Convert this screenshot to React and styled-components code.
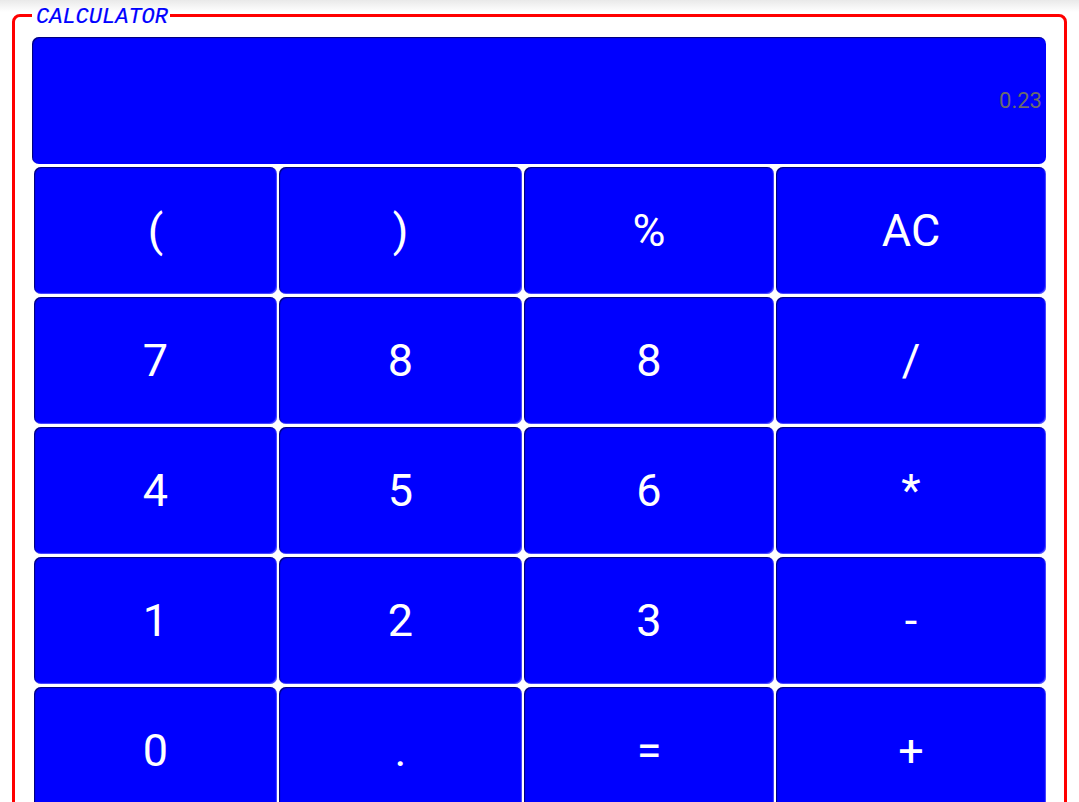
import React from "react";
import styled, { createGlobalStyle } from "styled-components";

const GlobalStyle = createGlobalStyle`
  html, body {
    margin: 0;
    padding: 0;
  }
  body {
    padding-top: 3px;
    background: linear-gradient(#e9e9e9, #ffffff 12px) no-repeat, #ffffff;
    font-family: Roboto, "Liberation Sans", sans-serif;
  }
`;

const keys = [
  "(", ")", "%", "AC",
  "7", "8", "8", "/",
  "4", "5", "6", "*",
  "1", "2", "3", "-",
  "0", ".", "=", "+",
];

export default function App() {
  return (
    <>
      <GlobalStyle />
      <Frame>
        <Title>
          <TitleText>CALCULATOR</TitleText>
        </Title>
        <Display>
          <Output>0.23</Output>
        </Display>
        <Keypad>
          {keys.map((key, i) => (
            <Key key={i}>{key}</Key>
          ))}
        </Keypad>
      </Frame>
    </>
  );
}

const Frame = styled.fieldset`
  margin: 0 12px;
  padding: 9px 18px 10px 17px;
  border: 3px solid #ff0000;
  border-radius: 8px;
  min-width: 0;
`;

const Title = styled.legend`
  padding: 0 2px 0 4px;
  font-family: "Liberation Mono", "Courier New", monospace;
  font-style: italic;
  font-size: 22px;
  color: #0000ff;
`;

const TitleText = styled.span`
  display: inline-block;
  transform: translateY(2px);
  -webkit-text-stroke: 0.2px #0000ff;
`;

const Display = styled.div`
  height: 127px;
  display: flex;
  align-items: center;
  justify-content: flex-end;
  padding-right: 4px;
  background: #0000ff;
  border-radius: 7px;
  box-shadow: inset 1px 1px 1px rgba(0, 0, 0, 0.55);
`;

const Output = styled.span`
  font-size: 22px;
  color: #6b6b6b;
`;

const Keypad = styled.div`
  display: grid;
  grid-template-columns: 243px 243px 250px 1fr;
  grid-auto-rows: 127px;
  gap: 3px 2px;
  margin: 3px 0 0 2px;
`;

const Key = styled.button`
  display: flex;
  align-items: center;
  justify-content: center;
  margin: 0;
  padding: 0;
  border: none;
  border-radius: 7px;
  background: #0000ff;
  box-shadow: inset 1px 1px 1px rgba(0, 0, 0, 0.55),
    inset -1px -1px 1px rgba(255, 255, 255, 0.3);
  color: #ffffff;
  font-family: Roboto, "Liberation Sans", sans-serif;
  font-size: 45px;
`;
